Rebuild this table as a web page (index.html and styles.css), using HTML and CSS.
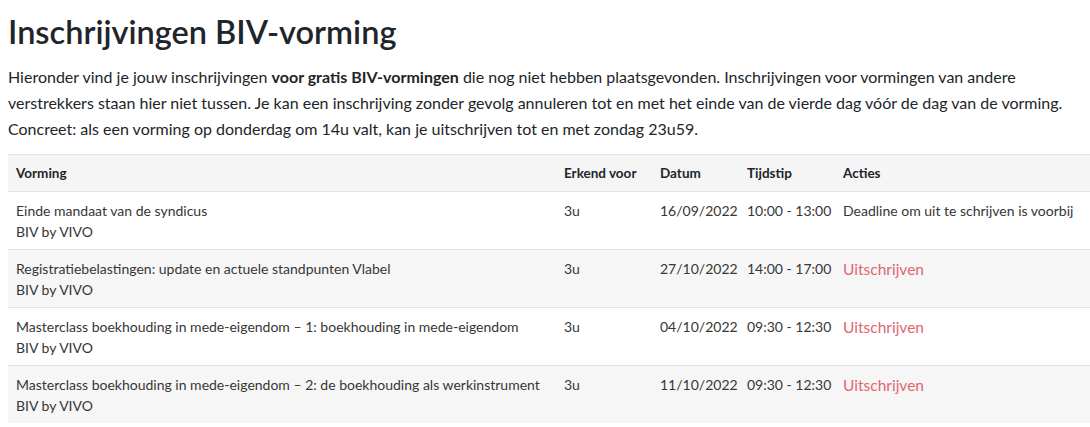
FILE: index.html
```html
<!DOCTYPE html>
<html lang="nl">
<head>
<meta charset="utf-8">
<title>Inschrijvingen BIV-vorming</title>
<link rel="stylesheet" href="styles.css">
</head>
<body>
<main class="page">
  <h2 class="title">Inschrijvingen BIV-vorming</h2>
  <p class="intro">Hieronder vind je jouw inschrijvingen <strong>voor gratis BIV-vormingen</strong> die nog niet hebben plaatsgevonden. Inschrijvingen voor vormingen van andere verstrekkers staan hier niet tussen. Je kan een inschrijving zonder gevolg annuleren tot en met het einde van de vierde dag vóór de dag van de vorming. Concreet: als een vorming op donderdag om 14u valt, kan je uitschrijven tot en met zondag 23u59.</p>
  <table class="table">
    <thead>
      <tr>
        <th class="c-vorming">Vorming</th>
        <th class="c-erkend">Erkend voor</th>
        <th class="c-datum">Datum</th>
        <th class="c-tijd">Tijdstip</th>
        <th class="c-acties">Acties</th>
      </tr>
    </thead>
    <tbody>
      <tr>
        <td>Einde mandaat van de syndicus<br>BIV by VIVO</td>
        <td>3u</td>
        <td>16/09/2022</td>
        <td>10:00 - 13:00</td>
        <td>Deadline om uit te schrijven is voorbij</td>
      </tr>
      <tr class="striped">
        <td>Registratiebelastingen: update en actuele standpunten Vlabel<br>BIV by VIVO</td>
        <td>3u</td>
        <td>27/10/2022</td>
        <td>14:00 - 17:00</td>
        <td><a class="unsubscribe" href="#">Uitschrijven</a></td>
      </tr>
      <tr>
        <td>Masterclass boekhouding in mede-eigendom – 1: boekhouding in mede-eigendom<br>BIV by VIVO</td>
        <td>3u</td>
        <td>04/10/2022</td>
        <td>09:30 - 12:30</td>
        <td><a class="unsubscribe" href="#">Uitschrijven</a></td>
      </tr>
      <tr class="striped">
        <td>Masterclass boekhouding in mede-eigendom – 2: de boekhouding als werkinstrument<br>BIV by VIVO</td>
        <td>3u</td>
        <td>11/10/2022</td>
        <td>09:30 - 12:30</td>
        <td><a class="unsubscribe" href="#">Uitschrijven</a></td>
      </tr>
    </tbody>
  </table>
</main>
</body>
</html>
```
FILE: styles.css
```css
html, body {
  margin: 0;
  padding: 0;
  background: #ffffff;
}

body {
  font-family: Lato, "Open Sans", sans-serif;
  color: #212529;
  overflow: hidden;
}

.page {
  padding: 8px 0 0 8px;
  width: 1090px;
}

.title {
  margin: 0;
  font-size: 32.5px;
  font-weight: 600;
  line-height: 48px;
  color: #212529;
}

.intro {
  margin: 8px 0 12px;
  width: 1060px;
  font-size: 16px;
  line-height: 26px;
  color: #212529;
}

.intro strong {
  font-weight: 700;
}

.table {
  width: 1082px;
  table-layout: fixed;
  border-collapse: collapse;
  font-size: 14px;
  line-height: 21px;
  color: #363636;
}

.table th,
.table td {
  text-align: left;
  vertical-align: top;
  padding: 8px 8px 7px;
  border-top: 1px solid #e3e3e3;
  white-space: nowrap;
}

.table th {
  font-weight: 700;
  font-size: 13.5px;
  color: #212529;
  background: #f5f5f5;
  padding-top: 8px;
  padding-bottom: 7px;
  border-bottom: 1px solid #e3e3e3;
}

.c-vorming { width: 532px; }
.c-erkend { width: 80px; }
.c-datum { width: 71px; }
.c-tijd { width: 80px; }

.striped td {
  background: #f6f6f6;
}

.unsubscribe {
  display: inline-block;
  padding-top: 1px;
  color: #e0666f;
  font-size: 15.5px;
  text-decoration: none;
}
```
